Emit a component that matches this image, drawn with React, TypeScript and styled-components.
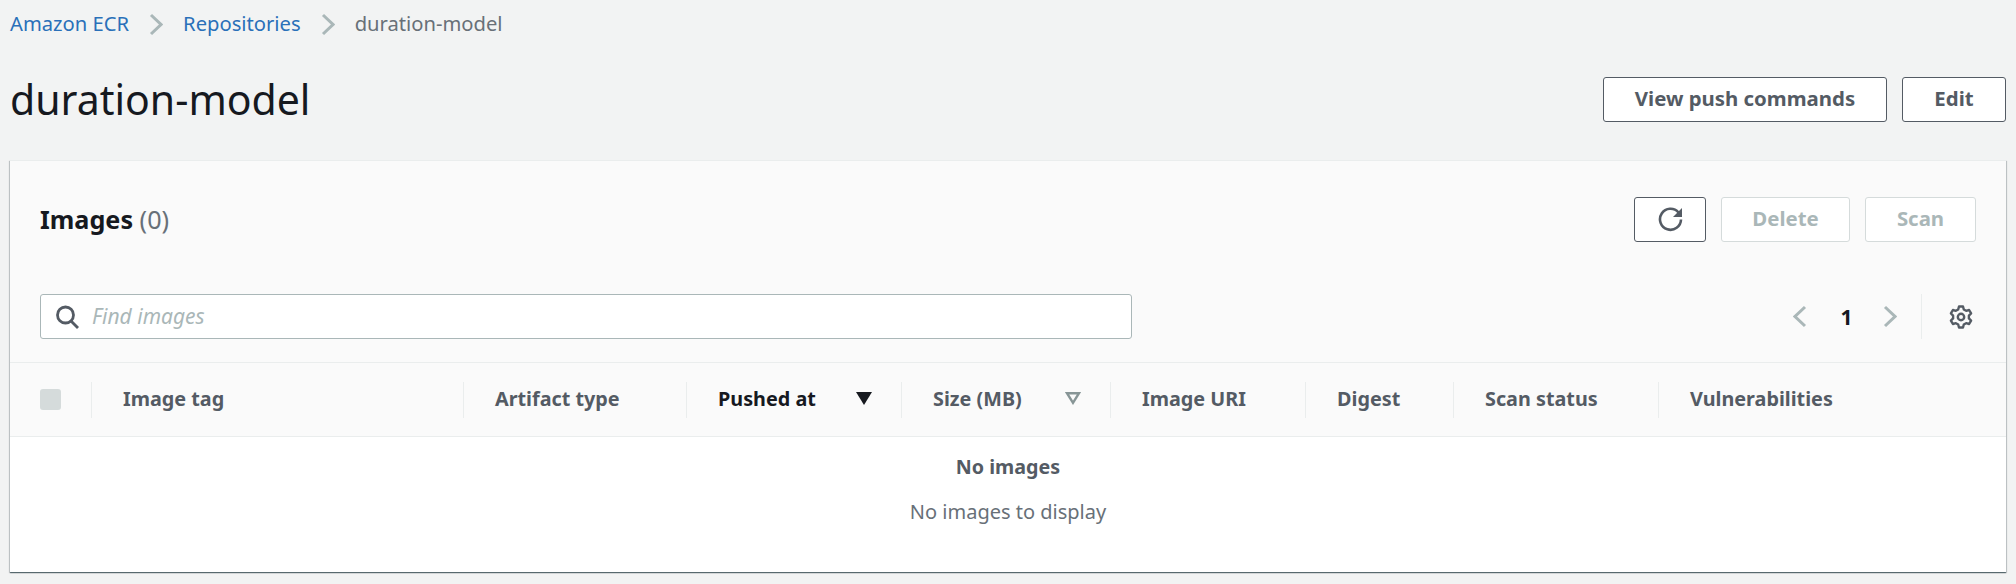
import styled, { createGlobalStyle } from 'styled-components';

const GlobalStyle = createGlobalStyle`
	html, body {
		margin: 0;
		padding: 0;
		background: #f2f3f3;
	}
	body {
		font-family: "Noto Sans", "Open Sans", "Liberation Sans", sans-serif;
		font-size: 20px;
		color: #16191f;
	}
	* {
		box-sizing: border-box;
	}
`;

const Page = styled.div`
	width: 2016px;
	height: 584px;
	padding: 0 10px;
	overflow: hidden;
`;

const Breadcrumbs = styled.nav`
	display: flex;
	align-items: center;
	gap: 20px;
	height: 48px;
	font-size: 20.2px;
`;

const Crumb = styled.a`
	display: block;
	padding-bottom: 2px;
	color: #2a70b9;
	text-decoration: none;
`;

const CurrentCrumb = styled.span`
	display: block;
	padding-bottom: 2px;
	color: #687078;
`;

const TitleRow = styled.header`
	display: flex;
	align-items: center;
	justify-content: space-between;
	height: 45px;
	margin-top: 29px;
	margin-bottom: 38px;
`;

const Title = styled.h1`
	margin: 0;
	font-size: 41px;
	font-weight: 400;
	line-height: 45px;
	color: #16191f;
`;

const Actions = styled.div`
	display: flex;
	gap: 15px;
`;

const Button = styled.button<{ $width: number }>`
	display: flex;
	align-items: center;
	justify-content: center;
	width: ${(p) => p.$width}px;
	height: 45px;
	padding: 0 0 4px;
	background: #fff;
	border: 1px solid ${(p) => (p.disabled ? '#d5dbdb' : '#545b64')};
	border-radius: 3px;
	color: ${(p) => (p.disabled ? '#aab7b8' : '#545b64')};
	font-family: inherit;
	font-size: 20.4px;
	font-weight: 700;
`;

const IconButton = styled(Button)`
	padding: 0;
`;

const Card = styled.section`
	display: flex;
	flex-direction: column;
	height: 412px;
	background: #fff;
	box-shadow: 0 1px 1px 0 rgba(0, 28, 36, 0.5), 1px 1px 1px 0 rgba(0, 28, 36, 0.15),
		-1px 1px 1px 0 rgba(0, 28, 36, 0.15);
	border-top: 1px solid #eaeded;
`;

const CardHead = styled.div`
	background: #fafafa;
	padding-top: 36px;
`;

const HeadRow = styled.div`
	display: flex;
	align-items: center;
	justify-content: space-between;
	height: 45px;
	padding: 0 30px;
`;

const CardTitle = styled.h2`
	margin: 0;
	padding-bottom: 2px;
	font-size: 25.2px;
	font-weight: 700;
	color: #16191f;
`;

const Count = styled.span`
	font-weight: 400;
	color: #687078;
`;

const SearchRow = styled.div`
	display: flex;
	align-items: center;
	justify-content: space-between;
	height: 45px;
	margin-top: 52px;
	margin-bottom: 23px;
	padding: 0 33px 0 30px;
`;

const SearchBox = styled.label`
	display: flex;
	align-items: center;
	gap: 13px;
	width: 1092px;
	height: 45px;
	padding-left: 15px;
	background: #fff;
	border: 1px solid #aab7b8;
	border-radius: 3px;
`;

const SearchInput = styled.input`
	flex: 1;
	padding: 0 0 2px;
	border: none;
	outline: none;
	background: transparent;
	font-family: inherit;
	font-size: 21px;
	color: #16191f;

	&::placeholder {
		color: #aab7b8;
		font-style: italic;
		opacity: 1;
	}
`;

const Pager = styled.div`
	display: flex;
	align-items: center;
	height: 45px;
`;

const PageNumber = styled.span`
	width: 76px;
	padding-left: 3px;
	text-align: center;
	font-size: 21px;
	font-weight: 700;
	color: #16191f;
`;

const PagerDivider = styled.span`
	width: 1px;
	height: 45px;
	margin: 0 27px 0 24px;
	background: #eaeded;
`;

const HeaderRow = styled.div`
	display: flex;
	align-items: center;
	height: 75px;
	border-top: 1px solid #eaeded;
	border-bottom: 1px solid #eaeded;
`;

const SelectCell = styled.div`
	flex: none;
	width: 81px;
	padding-left: 30px;
`;

const Checkbox = styled.span`
	display: block;
	width: 21px;
	height: 21px;
	background: #d5dbdb;
	border-radius: 3px;
`;

const HeaderCell = styled.div<{ $width?: number; $active?: boolean }>`
	display: flex;
	align-items: center;
	justify-content: space-between;
	flex: ${(p) => (p.$width ? 'none' : '1')};
	width: ${(p) => (p.$width ? `${p.$width}px` : 'auto')};
	height: 36px;
	padding: 0 29px 2px 31px;
	border-left: 1px solid #eaeded;
	font-size: 19.8px;
	font-weight: 700;
	color: ${(p) => (p.$active ? '#16191f' : '#545b64')};
`;

const EmptyState = styled.div`
	display: flex;
	flex-direction: column;
	align-items: center;
	padding-top: 15px;
	color: #687078;
`;

const EmptyTitle = styled.strong`
	font-size: 19.7px;
	font-weight: 700;
	line-height: 30px;
	color: #545b64;
`;

const EmptyText = styled.span`
	margin-top: 15px;
	font-size: 20px;
	line-height: 30px;
`;

function Chevron({ direction = 'right' }: { direction?: 'left' | 'right' }) {
	const d = direction === 'right' ? 'M2 2l10 9.5L2 21' : 'M12 2L2 11.5 12 21';
	return (
		<svg width="14" height="23" viewBox="0 0 14 23" fill="none" stroke="#aab7b8" strokeWidth="3">
			<path d={d} />
		</svg>
	);
}

function RefreshIcon() {
	return (
		<svg width="25" height="25" viewBox="0 0 25 25" fill="none">
			<path d="M20.5 5.5A10.5 10.5 0 1 0 23 12.5" stroke="#545b64" strokeWidth="2.6" />
			<path d="M24 1v9h-9z" fill="#545b64" />
		</svg>
	);
}

function SearchIcon() {
	return (
		<svg width="23" height="24" viewBox="0 0 23 24" fill="none" stroke="#545b64" strokeWidth="2.8">
			<circle cx="9.5" cy="10" r="8" />
			<path d="M15 16l7 7" />
		</svg>
	);
}

function GearIcon() {
	return (
		<svg width="24" height="24" viewBox="0 0 24 24" fill="none" stroke="#545b64" strokeWidth="2.4" strokeLinejoin="round">
			<circle cx="12" cy="12" r="3.2" />
			<path d="M10 1.5h4l.8 3 2.3 1.3 3-.8 2 3.4-2.2 2.2v2.8l2.2 2.2-2 3.4-3-.8-2.3 1.3-.8 3h-4l-.8-3-2.3-1.3-3 .8-2-3.4 2.2-2.2v-2.8L1.9 8.4l2-3.4 3 .8 2.3-1.3z" />
		</svg>
	);
}

function SortIcon({ active }: { active?: boolean }) {
	return (
		<svg width="16" height="13" viewBox="0 0 16 13">
			{active ? (
				<path d="M0 0h16L8 13z" fill="#16191f" />
			) : (
				<path d="M2 1.2h12L8 10.8z" fill="none" stroke="#879596" strokeWidth="2.4" />
			)}
		</svg>
	);
}

const columns = [
	{ label: 'Image tag', width: 372 },
	{ label: 'Artifact type', width: 223 },
	{ label: 'Pushed at', width: 215, sort: 'active' },
	{ label: 'Size (MB)', width: 209, sort: 'idle' },
	{ label: 'Image URI', width: 195 },
	{ label: 'Digest', width: 148 },
	{ label: 'Scan status', width: 205 },
	{ label: 'Vulnerabilities' },
];

export default function App() {
	return (
		<Page>
			<GlobalStyle />
			<Breadcrumbs>
				<Crumb href="#">Amazon ECR</Crumb>
				<Chevron />
				<Crumb href="#">Repositories</Crumb>
				<Chevron />
				<CurrentCrumb>duration-model</CurrentCrumb>
			</Breadcrumbs>
			<TitleRow>
				<Title>duration-model</Title>
				<Actions>
					<Button $width={284}>View push commands</Button>
					<Button $width={104}>Edit</Button>
				</Actions>
			</TitleRow>
			<Card>
				<CardHead>
					<HeadRow>
						<CardTitle>
							Images <Count>(0)</Count>
						</CardTitle>
						<Actions>
							<IconButton $width={72} aria-label="Refresh">
								<RefreshIcon />
							</IconButton>
							<Button $width={129} disabled>
								Delete
							</Button>
							<Button $width={111} disabled>
								Scan
							</Button>
						</Actions>
					</HeadRow>
					<SearchRow>
						<SearchBox>
							<SearchIcon />
							<SearchInput placeholder="Find images" />
						</SearchBox>
						<Pager>
							<Chevron direction="left" />
							<PageNumber>1</PageNumber>
							<Chevron />
							<PagerDivider />
							<GearIcon />
						</Pager>
					</SearchRow>
					<HeaderRow>
						<SelectCell>
							<Checkbox />
						</SelectCell>
						{columns.map((col) => (
							<HeaderCell key={col.label} $width={col.width} $active={col.sort === 'active'}>
								{col.label}
								{col.sort && <SortIcon active={col.sort === 'active'} />}
							</HeaderCell>
						))}
					</HeaderRow>
				</CardHead>
				<EmptyState>
					<EmptyTitle>No images</EmptyTitle>
					<EmptyText>No images to display</EmptyText>
				</EmptyState>
			</Card>
		</Page>
	);
}
